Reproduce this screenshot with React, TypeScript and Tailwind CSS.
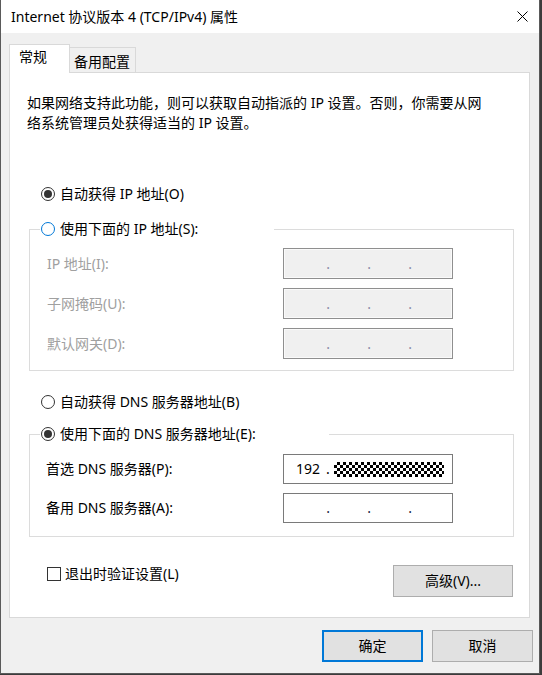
import React from "react";

const FONT = "font-['Noto_Sans','Noto_Sans_CJK_SC',sans-serif]";

function Radio({ checked, focus }: { checked?: boolean; focus?: boolean }) {
  return (
    <span
      className={`flex h-[14px] w-[14px] shrink-0 items-center justify-center rounded-full border bg-white ${
        focus ? "border-[#0078d7]" : "border-[#333333]"
      }`}
    >
      {checked && <span className="h-[8px] w-[8px] rounded-full bg-[#333333]" />}
    </span>
  );
}

function Dots({ disabled }: { disabled?: boolean }) {
  return (
    <div className={`flex pl-[5px] text-[14px] leading-[20px] ${disabled ? "text-[#8c8ca8]" : "text-[#1a1a40]"}`}>
      <span className="w-[41px] text-right">.</span>
      <span className="w-[41px] text-right">.</span>
      <span className="w-[41px] text-right">.</span>
    </div>
  );
}

function Btn({ children, primary, className = "" }: { children: React.ReactNode; primary?: boolean; className?: string }) {
  return (
    <div
      className={`flex h-[32px] items-center justify-center bg-[#e1e1e1] text-[14px] leading-[20px] text-black ${
        primary ? "border border-[#0078d7] shadow-[inset_0_0_0_1px_#0078d7]" : "border border-[#adadad]"
      } ${className}`}
    >
      {children}
    </div>
  );
}

export default function App() {
  return (
    <div className={`h-[675px] w-[542px] bg-[#3c3c3c] ${FONT}`}>
      <div className="flex h-[674px] w-[540px] flex-col border-x border-b border-[#5a5a5a] bg-[#f0f0f0]">
        {/* Title bar */}
        <div className="flex h-[33px] shrink-0 items-center justify-between bg-white pl-[10px] pr-[11px]">
          <span className="text-[14px] leading-[20px] text-black">Internet 协议版本 4 (TCP/IPv4) 属性</span>
          <svg width="11" height="11" viewBox="0 0 11 11" className="block">
            <path d="M0.5 0.5 L10.5 10.5 M10.5 0.5 L0.5 10.5" stroke="#000" strokeWidth="1" fill="none" />
          </svg>
        </div>

        {/* Body */}
        <div className="flex flex-col pl-[8px] pt-[11px]">
          {/* Tabs */}
          <div className="flex h-[29px] items-end">
            <div className="relative z-10 h-[29px] w-[61px] border-x border-t border-[#d9d9d9] bg-white pl-[9px] pt-[2px] text-[14px] leading-[20px] text-black">
              常规
            </div>
            <div className="h-[26px] w-[66px] border-r border-t border-[#d9d9d9] bg-[#f0f0f0] pl-[4px] pt-[4px] text-[14px] leading-[20px] text-black">
              备用配置
            </div>
          </div>

          {/* Panel */}
          <div className="-mt-px flex h-[546px] w-[521px] flex-col border border-[#d9d9d9] bg-white text-[14px] leading-[20px] text-black">
            <p className="pl-[17px] pt-[20px]">
              如果网络支持此功能，则可以获取自动指派的 IP 设置。否则，你需要从网
              <br />
              络系统管理员处获得适当的 IP 设置。
            </p>

            <div className="mt-[51px] flex h-[20px] items-center gap-[5px] pl-[31px]">
              <Radio checked />
              <span>自动获得 IP 地址(O)</span>
            </div>

            <fieldset className="ml-[19px] mt-[15px] w-[485px] border border-[#dcdcdc] px-0 pb-[11px] pt-0">
              <legend className="ml-[10px] flex h-[20px] w-[234px] items-center gap-[5px] pl-[1px]">
                <Radio focus />
                <span>使用下面的 IP 地址(S):</span>
              </legend>
              <div className="mt-[9px] flex flex-col gap-[9px] text-[#a0a0a0]">
                {["IP 地址(I):", "子网掩码(U):", "默认网关(D):"].map((l) => (
                  <div key={l} className="flex h-[31px] items-center">
                    <span className="w-[253px] pl-[17px]">{l}</span>
                    <div className="flex h-[31px] w-[170px] items-center border border-[#8f8f8f] bg-[#f0f0f0] shadow-[inset_0_0_0_1px_#fafafa]">
                      <Dots disabled />
                    </div>
                  </div>
                ))}
              </div>
            </fieldset>

            <div className="mt-[21px] flex h-[20px] items-center gap-[5px] pl-[31px]">
              <Radio />
              <span>自动获得 DNS 服务器地址(B)</span>
            </div>

            <fieldset className="ml-[19px] mt-[12px] w-[485px] border border-[#dcdcdc] px-0 pb-[13px] pt-0">
              <legend className="ml-[10px] flex h-[20px] w-[289px] items-center gap-[5px] pl-[1px]">
                <Radio checked />
                <span>使用下面的 DNS 服务器地址(E):</span>
              </legend>
              <div className="mt-[10px] flex flex-col gap-[9px]">
                <div className="flex h-[30px] items-center">
                  <span className="w-[253px] pl-[16px]">首选 DNS 服务器(P):</span>
                  <div className="flex h-[30px] w-[170px] items-center border border-[#7a7a7a] bg-white pl-[12px]">
                    <span>192</span>
                    <span className="ml-[6px]">.</span>
                    <span className="ml-[4px] h-[15px] w-[110px] bg-[repeating-conic-gradient(#000_0_25%,#fff_0_50%)] bg-[length:6px_6px]" />
                  </div>
                </div>
                <div className="flex h-[30px] items-center">
                  <span className="w-[253px] pl-[16px]">备用 DNS 服务器(A):</span>
                  <div className="flex h-[30px] w-[170px] items-center border border-[#7a7a7a] bg-white">
                    <Dots />
                  </div>
                </div>
              </div>
            </fieldset>

            <div className="ml-[37px] mr-[16px] mt-[27px] flex items-start justify-between">
              <div className="flex h-[20px] items-center gap-[4px]">
                <span className="h-[14px] w-[14px] border border-[#333333] bg-white" />
                <span>退出时验证设置(L)</span>
              </div>
              <Btn className="mt-[1px] w-[120px]">高级(V)...</Btn>
            </div>
          </div>

          {/* Bottom buttons */}
          <div className="mt-[12px] flex justify-end gap-[9px] pr-[6px]">
            <Btn primary className="w-[101px]">确定</Btn>
            <Btn className="w-[101px]">取消</Btn>
          </div>
        </div>
      </div>
    </div>
  );
}
